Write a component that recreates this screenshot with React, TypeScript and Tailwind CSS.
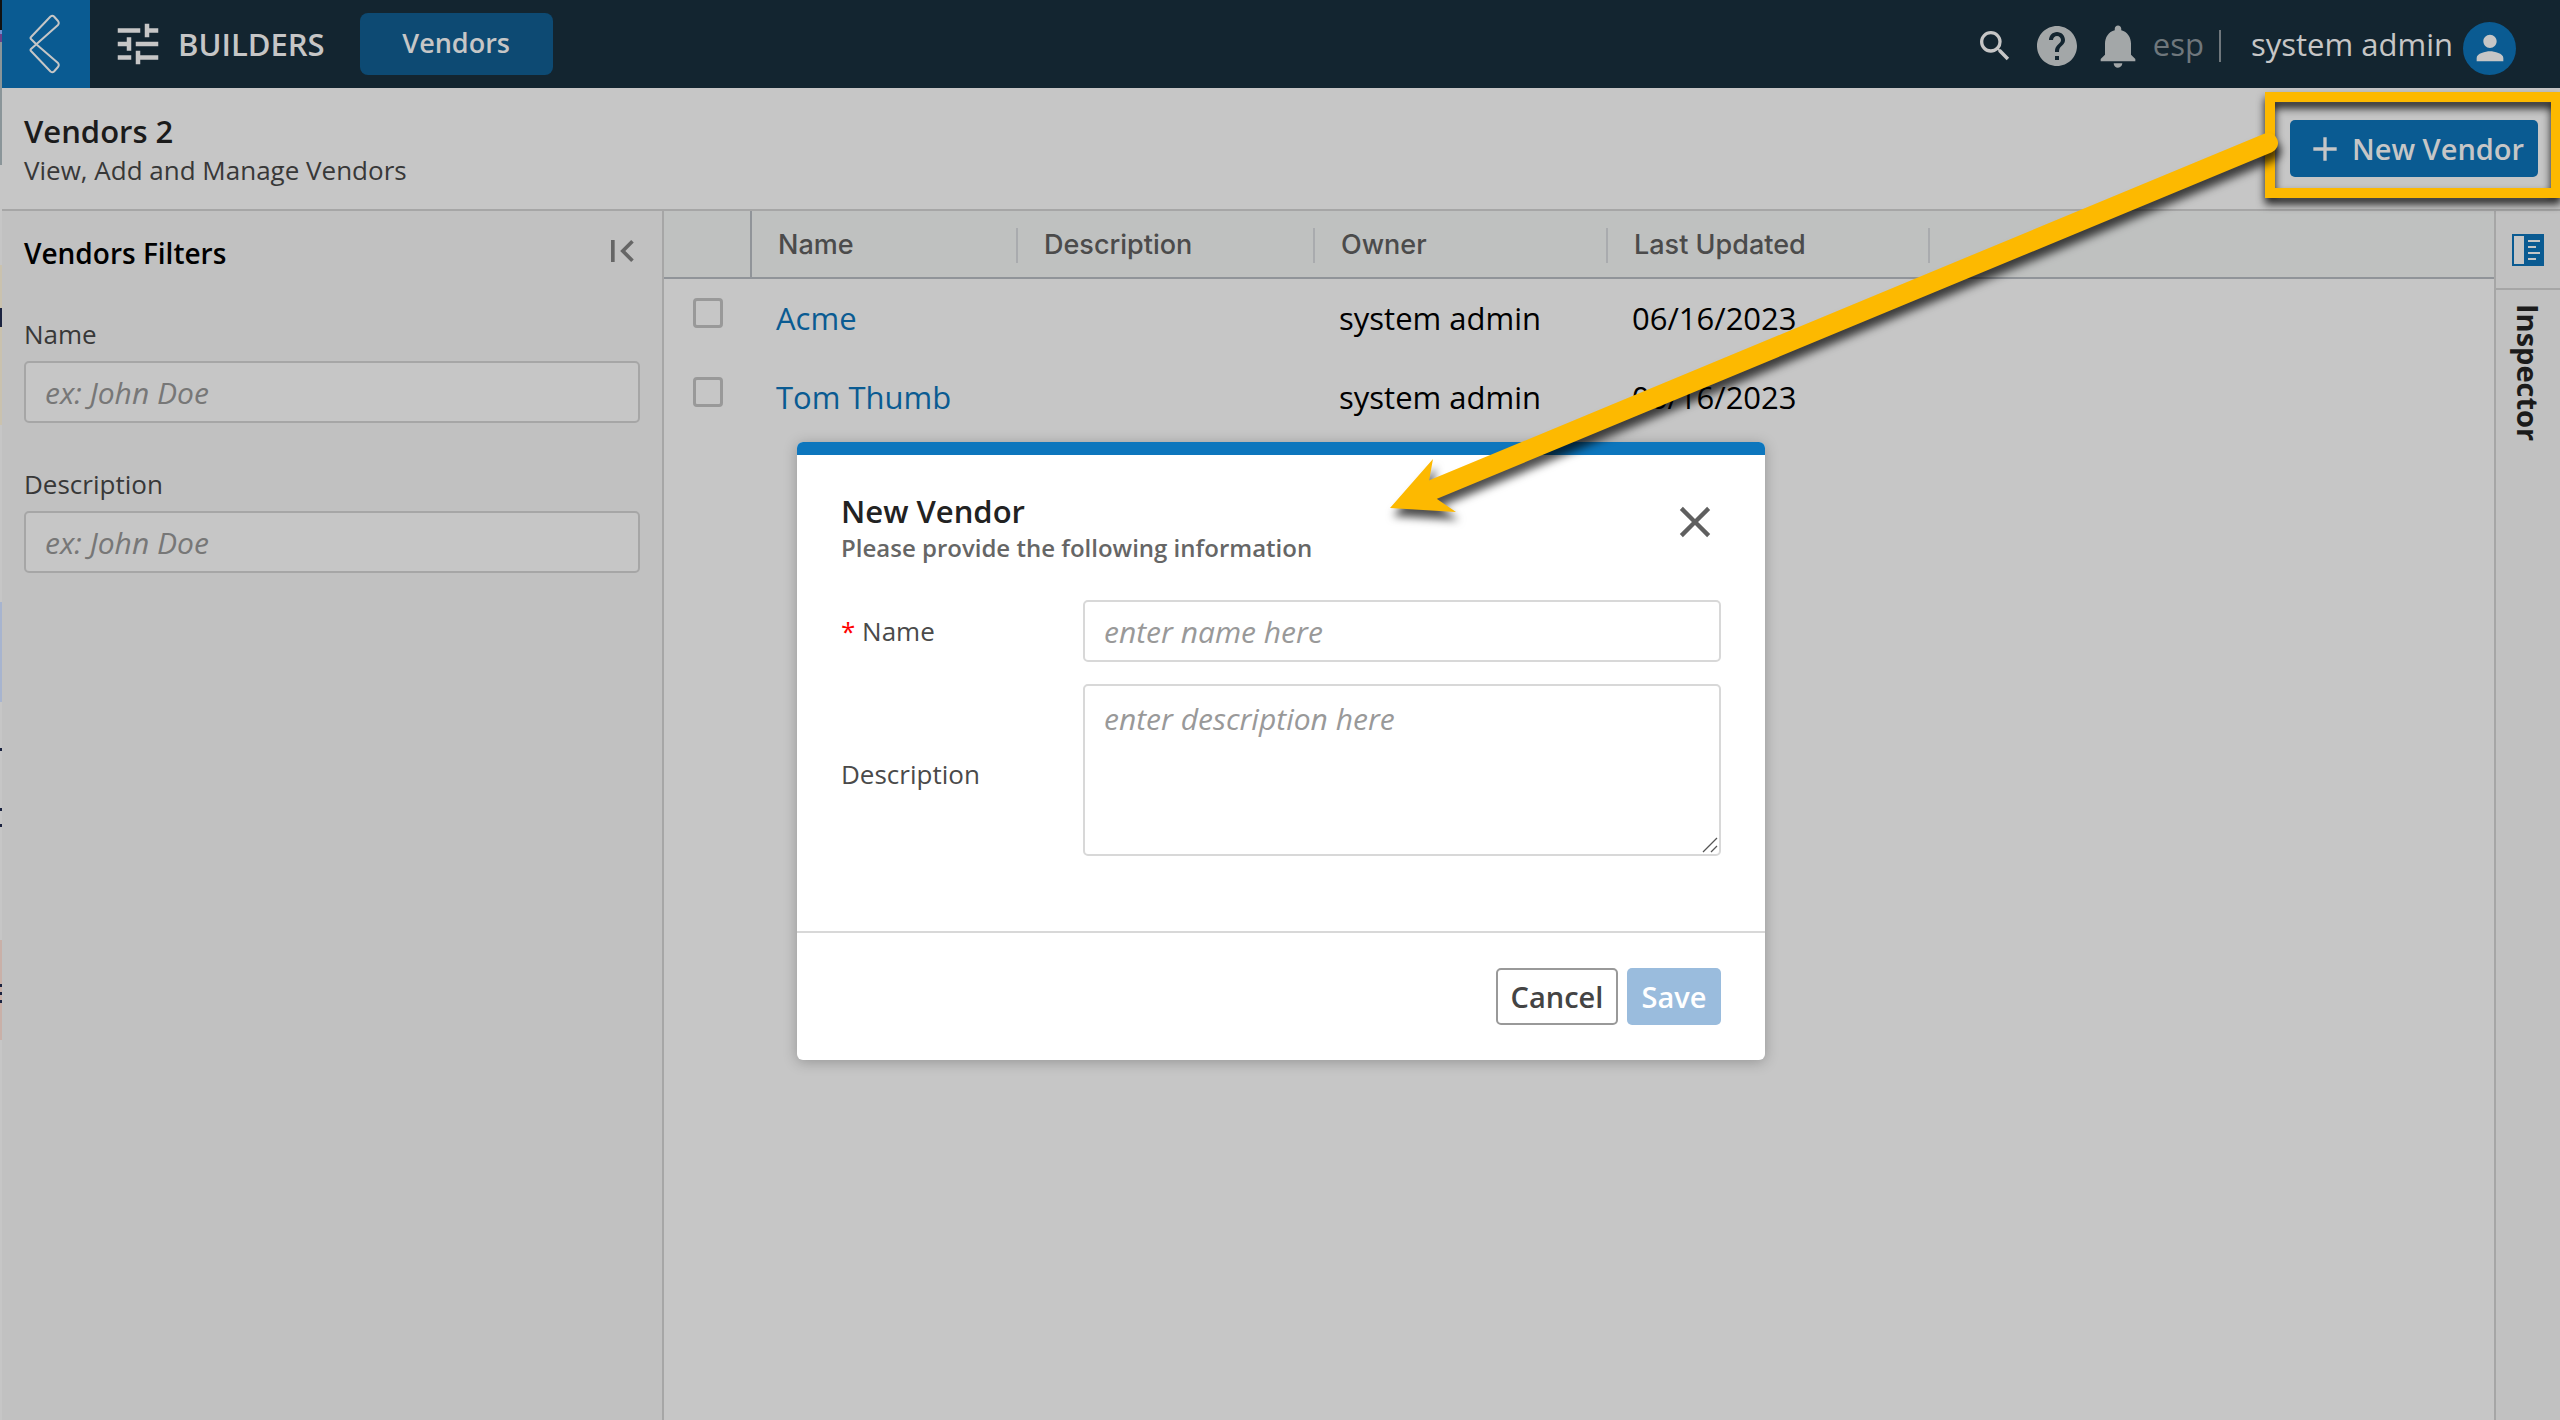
import { useState } from "react";
import {
  MdAdd,
  MdClose,
  MdFirstPage,
  MdHelp,
  MdNotifications,
  MdPerson,
  MdSearch,
  MdTune,
} from "react-icons/md";

const vendors = [
  { name: "Acme", description: "", owner: "system admin", updated: "06/16/2023" },
  { name: "Tom Thumb", description: "", owner: "system admin", updated: "06/16/2023" },
];

const columns = [
  { title: "Name", width: "w-[266px]" },
  { title: "Description", width: "w-[297px]" },
  { title: "Owner", width: "w-[293px]" },
  { title: "Last Updated", width: "w-[322px]" },
];

// [top, height, color] of the window that shows behind the left edge
const edge: [number, number, string][] = [
  [0, 30, "#111111"],
  [30, 4, "#6f8fd0"],
  [34, 8, "#6b4189"],
  [42, 123, "#8a9599"],
  [265, 160, "#cac2ae"],
  [308, 19, "#1b2340"],
  [602, 100, "#a7b4cf"],
  [748, 3, "#1b2340"],
  [808, 3, "#1b2340"],
  [824, 3, "#1b2340"],
  [940, 100, "#c9b0a8"],
  [984, 3, "#1b2340"],
  [992, 3, "#1b2340"],
  [1000, 3, "#1b2340"],
];

function Edge() {
  return (
    <svg className="absolute left-0 top-0 h-full w-[2px]" aria-hidden="true">
      {edge.map(([y, h, fill]) => (
        <rect key={y} x="0" y={y} width="2" height={h} fill={fill} />
      ))}
    </svg>
  );
}

function TopBar() {
  return (
    <header className="flex h-[88px] shrink-0 items-center bg-[#132530] text-[#c6c6c6]">
      <button aria-label="Back" className="flex h-full w-[88px] items-center justify-center bg-[#0a5b92] pr-[2px]">
        <svg width="32" height="60" viewBox="0 0 32 60" fill="none" stroke="#c6c6c6" strokeWidth="2" strokeLinejoin="round">
          <path d="M7 30 L2 25 Q1 24 2 23 L21.500 2.500 Q23.500 1 25 2.500 L29 7 Q30.500 9 29 11 L2 35 Q1 36 2 37 L21.500 57.500 Q23.500 59 25 57.500 L29 53 Q30.500 51 29 49 Z" />
        </svg>
      </button>
      <div className="ml-[21px] flex items-center">
        <MdTune size={54} />
        <span className="ml-[13px] text-[31px] font-semibold">BUILDERS</span>
      </div>
      <button className="ml-[35px] h-[62px] w-[193px] rounded-lg bg-[#0d4a73] pb-[2px] text-[27px] font-semibold">
        Vendors
      </button>

      <div className="ml-auto flex items-center pr-[44px]">
        <button aria-label="Search" className="pt-1">
          <MdSearch size={40} />
        </button>
        <button aria-label="Help" className="ml-[18px] pt-1 text-[#a3a7a8]">
          <MdHelp size={48} />
        </button>
        <button aria-label="Notifications" className="ml-[11px] pt-1 text-[#a3a7a8]">
          <MdNotifications size={52} />
        </button>
        <span className="ml-[9px] text-[31px] text-[#6f777c]">esp</span>
        <span className="ml-[15px] mt-1 h-[32px] w-[2px] bg-[#6f777c]" />
        <span className="ml-[30px] text-[31px]">system admin</span>
        <button aria-label="Account" className="ml-[10px] mt-2 flex size-[53px] items-center justify-center rounded-full bg-[#0a5b92]">
          <MdPerson size={40} />
        </button>
      </div>
    </header>
  );
}

function TitleBar() {
  return (
    <div className="flex h-[123px] shrink-0 items-center justify-between border-b-2 border-[#a6a6a6] px-[22px]">
      <div className="pt-[3px]">
        <h1 className="text-[31px] font-semibold leading-[40px] text-[#1b1b1b]">Vendors 2</h1>
        <p className="text-[26px] leading-[38px] text-[#383838]">View, Add and Manage Vendors</p>
      </div>
      <div className="relative">
        <button className="flex h-[57px] w-[248px] items-center rounded-[5px] bg-[#0a5b92] pl-[15px] text-[29px] font-semibold text-[#c6c6c6]">
          <MdAdd size={40} />
          <span className="ml-[7px]">New Vendor</span>
        </button>
        <div className="pointer-events-none absolute -left-[25px] -right-[23px] -top-[28px] h-[106px] border-[10px] border-[#fdb900] drop-shadow-[0_6px_4px_rgba(0,0,0,0.85)]" />
      </div>
    </div>
  );
}

function FilterField({ id, label }: { id: string; label: string }) {
  return (
    <div className="flex flex-col">
      <label htmlFor={id} className="text-[26px] leading-[36px] text-[#383838]">
        {label}
      </label>
      <input
        id={id}
        placeholder="ex: John Doe"
        className="mt-[9px] h-[62px] rounded-[5px] border-2 border-[#a6a6a6] bg-[#c6c6c6] px-[19px] text-[30px] outline-none placeholder:italic placeholder:text-[#777777]"
      />
    </div>
  );
}

function Filters() {
  return (
    <aside className="w-[662px] shrink-0 border-r-2 border-[#a6a6a6] bg-[#c1c1c1] px-[22px] pt-[22px]">
      <div className="flex items-center justify-between">
        <h2 className="text-[28px] font-semibold leading-[40px] text-black">Vendors Filters</h2>
        <button aria-label="Collapse filters" className="-my-1 -mr-1 pb-1 text-[#666666]">
          <MdFirstPage size={44} />
        </button>
      </div>
      <div className="mt-[43px] flex flex-col gap-[43px]">
        <FilterField id="filter-name" label="Name" />
        <FilterField id="filter-description" label="Description" />
      </div>
    </aside>
  );
}

function VendorsTable() {
  return (
    <main className="min-w-0 flex-1">
      <table className="w-full table-fixed border-separate border-spacing-0 text-left">
        <thead>
          <tr className="h-[68px] bg-[#bfc1c0]">
            <th className="w-[88px] border-b-2 border-r-2 border-[#909499]" aria-label="Select" />
            {columns.map((c) => (
              <th key={c.title} className={`border-b-2 border-[#909499] p-0 pt-[2px] ${c.width}`}>
                <div className="flex h-[35px] items-center border-r-2 border-[#a9abae] pl-[26px] font-[Inter,sans-serif] text-[27px] font-medium text-[#4b4b4b]">
                  {c.title}
                </div>
              </th>
            ))}
            <th className="border-b-2 border-[#909499]" />
          </tr>
        </thead>
        <tbody>
          {vendors.map((v) => (
            <tr key={v.name} className="h-[79px] align-top text-[31px] leading-[44px] text-black">
              <td className="p-0 pl-[29px] pt-[19px]">
                <input
                  type="checkbox"
                  aria-label={`Select ${v.name}`}
                  className="block size-[30px] appearance-none rounded-[4px] border-[3px] border-[#999999]"
                />
              </td>
              <td className="p-0 pl-6 pt-[17px]">
                <a href="#" className="text-[#0a5b92]">
                  {v.name}
                </a>
              </td>
              <td className="p-0 pl-6 pt-[17px]">{v.description}</td>
              <td className="p-0 pl-6 pt-[17px]">{v.owner}</td>
              <td className="p-0 pl-6 pt-[17px]">{v.updated}</td>
              <td />
            </tr>
          ))}
        </tbody>
      </table>
    </main>
  );
}

function Inspector() {
  return (
    <aside className="flex w-[66px] shrink-0 flex-col border-l-2 border-[#a6a6a6] bg-[#c1c1c1]">
      <button aria-label="Open inspector" className="flex h-[79px] items-center justify-center border-b-2 border-[#a6a6a6]">
        <svg width="32" height="32" viewBox="0 0 32 32">
          <rect width="32" height="32" fill="#0a5b92" />
          <rect x="2" y="2" width="10" height="28" fill="#c6c6c6" />
          <path d="M16 7h12M16 13h8M16 19h12M16 25h8" stroke="#c6c6c6" strokeWidth="2" />
        </svg>
      </button>
      <span className="self-center pt-[14px] text-[29px] font-bold text-[#1b1b1b] [writing-mode:vertical-rl]">
        Inspector
      </span>
    </aside>
  );
}

function NewVendorDialog() {
  const [name, setName] = useState("");
  const [description, setDescription] = useState("");

  return (
    <div className="absolute inset-0 flex items-start justify-center pl-[2px] pt-[442px]">
      <form
        role="dialog"
        aria-label="New Vendor"
        className="w-[968px] overflow-hidden rounded-[6px] bg-white shadow-[0_2px_14px_rgba(0,0,0,0.25)]"
      >
        <div className="h-[13px] bg-[#0d76bd]" />
        <div className="flex justify-between px-[44px] pt-[36px]">
          <div>
            <h2 className="text-[31px] font-semibold leading-[40px] text-[#222222]">New Vendor</h2>
            <p className="text-[24px] font-semibold leading-[34px] text-[#666666]">
              Please provide the following information
            </p>
          </div>
          <button type="button" aria-label="Close" className="mt-[5px] size-[52px] text-[#5f5f5f]">
            <MdClose size={52} />
          </button>
        </div>

        <div className="grid grid-cols-[242px_1fr] items-center gap-y-[22px] px-[44px] pb-[75px] pt-[35px] text-[26px] text-[#4a4a4a]">
          <label htmlFor="vendor-name">
            <span className="text-[#ff0000]">*</span> Name
          </label>
          <input
            id="vendor-name"
            value={name}
            onChange={(e) => setName(e.target.value)}
            placeholder="enter name here"
            className="h-[62px] rounded-[5px] border-2 border-[#d8d8d8] px-[19px] text-[30px] outline-none placeholder:italic placeholder:text-[#999999]"
          />
          <label htmlFor="vendor-description" className="pt-2">
            Description
          </label>
          <div className="relative">
            <textarea
              id="vendor-description"
              value={description}
              onChange={(e) => setDescription(e.target.value)}
              placeholder="enter description here"
              className="block h-[172px] w-full resize-none rounded-[5px] border-2 border-[#d8d8d8] px-[19px] pt-[14px] text-[30px] leading-[38px] outline-none placeholder:italic placeholder:text-[#999999]"
            />
            <svg width="16" height="16" viewBox="0 0 16 16" className="absolute bottom-[3px] right-[3px]" stroke="#555555" strokeWidth="1.300">
              <path d="M1 15L15 1M9 15l6-6" />
            </svg>
          </div>
        </div>

        <div className="flex h-[129px] items-center justify-end gap-[9px] border-t-2 border-[#d8d8d8] px-[44px] text-[29px] font-semibold">
          <button type="button" className="h-[57px] w-[122px] rounded-[5px] border-2 border-[#999999] text-[#444444]">
            Cancel
          </button>
          <button type="submit" disabled className="h-[57px] w-[94px] rounded-[5px] bg-[#9abcdd] text-white">
            Save
          </button>
        </div>
      </form>
    </div>
  );
}

function Arrow() {
  return (
    <svg
      width="1200"
      height="540"
      viewBox="0 0 1200 540"
      className="pointer-events-none absolute right-0 top-0 drop-shadow-[3px_8px_4px_rgba(0,0,0,0.7)]"
      aria-hidden="true"
    >
      <path d="M908 143L72 490" stroke="#fdb900" strokeWidth="20" strokeLinecap="round" />
      <path d="M30 508L73 459L69 481L77 499L96 512Z" fill="#fdb900" />
    </svg>
  );
}

export default function App() {
  return (
    <div className="relative flex min-h-screen flex-col overflow-hidden bg-[#c6c6c6] pl-[2px] font-['Open_Sans',sans-serif]">
      <Edge />
      <TopBar />
      <TitleBar />
      <div className="flex flex-1">
        <Filters />
        <VendorsTable />
        <Inspector />
      </div>
      <NewVendorDialog />
      <Arrow />
    </div>
  );
}
